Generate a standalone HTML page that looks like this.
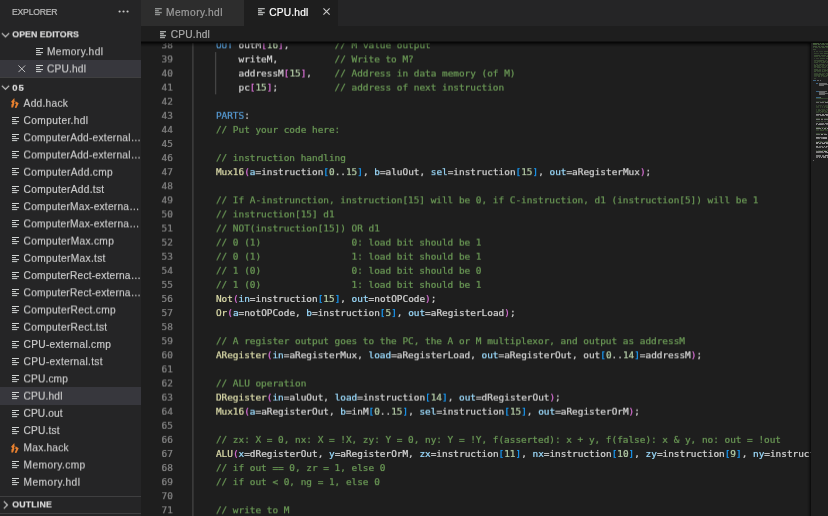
<!DOCTYPE html>
<html lang="en"><head><meta charset="utf-8"><title>CPU.hdl</title>
<style>
*{box-sizing:border-box}
html,body{margin:0;padding:0}
body{width:828px;height:516px;overflow:hidden;background:#1e1e1e;position:relative;font-family:"Liberation Sans",sans-serif;-webkit-font-smoothing:antialiased}
i{font-style:normal}
#tabs,#bc,#side .title,.hdr{will-change:transform}
#side{position:absolute;left:0;top:0;width:141px;height:516px;background:#252526;overflow:hidden;color:#ccc}
#side .title{-webkit-text-stroke:0.2px #bbb;position:absolute;left:12.2px;top:0;height:25.8px;line-height:24.6px;font-size:8.6px;color:#bbb;white-space:nowrap}
#side .dots{position:absolute;left:117.6px;top:10.45px}
.hdr{position:absolute;left:0;width:141px;height:17px;line-height:17px;font-size:8.8px;font-weight:bold;color:#ddd;white-space:nowrap;-webkit-text-stroke:0.15px;transform-origin:0 0}
.hdr .t{position:absolute;left:12.3px;top:0}
.hdr .chev{position:absolute;left:0.8px;top:3.9px}
.selbg{position:absolute;left:0;width:141px;height:17.23px;background:#37373d}
.row{will-change:transform;transform-origin:0 0;position:absolute;left:0;width:141px;height:17px;line-height:17px;font-size:10.18px;color:#ccc;white-space:nowrap;-webkit-text-stroke:0.14px #ccc}
.row .lbl{position:absolute;left:23.6px;top:0}
.ic{position:absolute;left:0;width:141px;height:17px}
.ic .fi{position:absolute;left:12.05px;top:4.95px;fill:#d0d3d2}
.ic .hi{position:absolute;left:10.7px;top:3.6px}
.oe .lbl{left:47.0px}
.oe .fi{left:35.8px}
.oe .cx{position:absolute;left:18.3px;top:4.8px}
.sep{position:absolute;left:0;width:141px;height:1px;background:#3f3f40}
#tabs{position:absolute;left:141px;top:0;width:687px;height:25.8px;background:#252526}
.tab{position:absolute;top:0;height:25.8px;line-height:25.4px;font-size:10.18px;white-space:nowrap;-webkit-text-stroke:0.2px}
.tab .fi{position:absolute;top:8.3px;fill:#d0d3d2}
#bc{position:absolute;left:141px;top:25.8px;width:687px;height:17.2px;background:#1e1e1e;line-height:17.4px;font-size:10.18px;color:#a9a9a9;white-space:nowrap;-webkit-text-stroke:0.2px}
#bc .fi{position:absolute;left:18.5px;top:4.85px;fill:#c4c7c6}
#bc .lbl{position:absolute;left:29.8px;top:0}
#ed{position:absolute;left:141px;top:43px;width:687px;height:473px;overflow:hidden;background:#1e1e1e}
#edin{position:absolute;left:-141px;top:-43px;width:828px;height:516px;font-family:"DejaVu Sans Mono","Liberation Mono",monospace;font-size:9.41px}
.L{-webkit-text-stroke:0.22px;position:absolute;left:141px;width:687px;height:14px;line-height:14px;will-change:transform;transform-origin:0 0;white-space:pre}
.ln{position:absolute;left:0;top:0;width:31.8px;text-align:right;color:#858585}
.cl{letter-spacing:-0.012px;position:absolute;left:52.3px;top:0;color:#d4d4d4}
.c{color:#6a9955}.k{color:#569cd6}.f{color:#dcdcaa}.v{color:#9cdcfe}.n{color:#b5cea8}.p{color:#da70d6}.b{color:#179fff}
.ig{position:absolute;width:1px;background:#424242}
#shadow{position:absolute;left:141px;top:41.2px;width:687px;height:5.6px;background:linear-gradient(#00000000,#000000d0 18%,#000000a0 35%,#00000050 60%,#00000000)}
#mm{position:absolute;left:811px;top:43px;width:17px;height:473px;background:#1e1e1e;overflow:hidden}
#mmsh{position:absolute;left:806.5px;top:43px;width:4.5px;height:473px;background:linear-gradient(90deg,#00000000,#00000038 50%,#000000a8)}
#mmc{position:absolute;left:-811px;top:-43px;width:828px;height:516px}
#mmc div{position:absolute}
</style></head><body>
<div id="side">
<div class="title"><span style="letter-spacing:-0.188px">EXPLORER</span></div>
<svg class="dots" width="12" height="3" viewBox="0 0 12 3"><circle cx="1.6" cy="1.5" r="1.08" fill="#c8c8c8"/><circle cx="5.55" cy="1.5" r="1.08" fill="#c8c8c8"/><circle cx="9.55" cy="1.5" r="1.08" fill="#c8c8c8"/></svg>
<div class="hdr" style="top:26px;transform:translateY(0.35px) rotate(0.001deg)"><svg class=chev viewBox="0 0 16 16" width="9" height="9"><path d="M1.5 5 L8 11.5 L14.5 5" fill="none" stroke="#c8c8c8" stroke-width="2.1"/></svg><span class="t" style="letter-spacing:0.034px">OPEN EDITORS</span></div>
<div class="ic oe" style="top:43.00px"><svg class=fi viewBox="0 0 7 8" width="7" height="8"><rect x="0" y="0" width="7.1" height="1"/><rect x="0" y="2.05" width="4" height="1"/><rect x="0" y="4.08" width="7.1" height="1"/><rect x="0" y="6.1" width="5.2" height="1"/></svg></div><div class="row oe" style="top:43px;transform:translateY(0.250px) rotate(0.001deg)"><span class="lbl" style="letter-spacing:0.401px">Memory.hdl</span></div>
<div class=selbg style="top:60.20px"></div><div class="ic oe" style="top:60.20px"><svg class=cx viewBox="0 0 16 16" width="7.6" height="7.6"><path d="M1 1 L15 15 M15 1 L1 15" fill="none" stroke="#cccccc" stroke-width="1.9"/></svg><svg class=fi viewBox="0 0 7 8" width="7" height="8"><rect x="0" y="0" width="7.1" height="1"/><rect x="0" y="2.05" width="4" height="1"/><rect x="0" y="4.08" width="7.1" height="1"/><rect x="0" y="6.1" width="5.2" height="1"/></svg></div><div class="row oe" style="top:60px;transform:translateY(0.450px) rotate(0.001deg)"><span class="lbl" style="letter-spacing:0.179px">CPU.hdl</span></div>
<div class="sep" style="top:77.4px"></div>
<div class="hdr" style="top:78px;transform:translateY(0.8px) rotate(0.001deg)"><svg class=chev viewBox="0 0 16 16" width="9" height="9"><path d="M1.5 5 L8 11.5 L14.5 5" fill="none" stroke="#c8c8c8" stroke-width="2.1"/></svg><span class="t" style="font-size:9.5px;letter-spacing:0.8px">05</span></div>
<div class="ic " style="top:94.60px"><svg class=hi viewBox="0 0 8 10" width="8" height="10"><path fill="#e8802f" d="M3.3 0 L3.7 3.9 L2.9 4.6 L3.5 5.4 L2.0 9.6 L0.3 9.6 L0.5 6.3 L1.5 5.4 L0.1 3.7 Z M4.6 3.3 L7.7 5.2 L5.4 9.9 L3.8 9.7 L4.5 7.6 L5.3 6.5 L4.2 5.5 Z"/></svg></div><div class="row " style="top:94px;transform:translateY(0.850px) rotate(0.001deg)"><span class=lbl style="letter-spacing:0.273px">Add.hack</span></div>
<div class="ic " style="top:111.82px"><svg class=fi viewBox="0 0 7 8" width="7" height="8"><rect x="0" y="0" width="7.1" height="1"/><rect x="0" y="2.05" width="4" height="1"/><rect x="0" y="4.08" width="7.1" height="1"/><rect x="0" y="6.1" width="5.2" height="1"/></svg></div><div class="row " style="top:112px;transform:translateY(0.073px) rotate(0.001deg)"><span class=lbl style="letter-spacing:0.361px">Computer.hdl</span></div>
<div class="ic " style="top:129.05px"><svg class=fi viewBox="0 0 7 8" width="7" height="8"><rect x="0" y="0" width="7.1" height="1"/><rect x="0" y="2.05" width="4" height="1"/><rect x="0" y="4.08" width="7.1" height="1"/><rect x="0" y="6.1" width="5.2" height="1"/></svg></div><div class="row " style="top:129px;transform:translateY(0.296px) rotate(0.001deg)"><span class=lbl style="letter-spacing:0.240px">ComputerAdd-external…</span></div>
<div class="ic " style="top:146.27px"><svg class=fi viewBox="0 0 7 8" width="7" height="8"><rect x="0" y="0" width="7.1" height="1"/><rect x="0" y="2.05" width="4" height="1"/><rect x="0" y="4.08" width="7.1" height="1"/><rect x="0" y="6.1" width="5.2" height="1"/></svg></div><div class="row " style="top:146px;transform:translateY(0.519px) rotate(0.001deg)"><span class=lbl style="letter-spacing:0.240px">ComputerAdd-external…</span></div>
<div class="ic " style="top:163.49px"><svg class=fi viewBox="0 0 7 8" width="7" height="8"><rect x="0" y="0" width="7.1" height="1"/><rect x="0" y="2.05" width="4" height="1"/><rect x="0" y="4.08" width="7.1" height="1"/><rect x="0" y="6.1" width="5.2" height="1"/></svg></div><div class="row " style="top:163px;transform:translateY(0.742px) rotate(0.001deg)"><span class=lbl style="letter-spacing:0.306px">ComputerAdd.cmp</span></div>
<div class="ic " style="top:180.71px"><svg class=fi viewBox="0 0 7 8" width="7" height="8"><rect x="0" y="0" width="7.1" height="1"/><rect x="0" y="2.05" width="4" height="1"/><rect x="0" y="4.08" width="7.1" height="1"/><rect x="0" y="6.1" width="5.2" height="1"/></svg></div><div class="row " style="top:180px;transform:translateY(0.965px) rotate(0.001deg)"><span class=lbl style="letter-spacing:0.302px">ComputerAdd.tst</span></div>
<div class="ic " style="top:197.94px"><svg class=fi viewBox="0 0 7 8" width="7" height="8"><rect x="0" y="0" width="7.1" height="1"/><rect x="0" y="2.05" width="4" height="1"/><rect x="0" y="4.08" width="7.1" height="1"/><rect x="0" y="6.1" width="5.2" height="1"/></svg></div><div class="row " style="top:198px;transform:translateY(0.188px) rotate(0.001deg)"><span class=lbl style="letter-spacing:0.231px">ComputerMax-externa…</span></div>
<div class="ic " style="top:215.16px"><svg class=fi viewBox="0 0 7 8" width="7" height="8"><rect x="0" y="0" width="7.1" height="1"/><rect x="0" y="2.05" width="4" height="1"/><rect x="0" y="4.08" width="7.1" height="1"/><rect x="0" y="6.1" width="5.2" height="1"/></svg></div><div class="row " style="top:215px;transform:translateY(0.411px) rotate(0.001deg)"><span class=lbl style="letter-spacing:0.231px">ComputerMax-externa…</span></div>
<div class="ic " style="top:232.38px"><svg class=fi viewBox="0 0 7 8" width="7" height="8"><rect x="0" y="0" width="7.1" height="1"/><rect x="0" y="2.05" width="4" height="1"/><rect x="0" y="4.08" width="7.1" height="1"/><rect x="0" y="6.1" width="5.2" height="1"/></svg></div><div class="row " style="top:232px;transform:translateY(0.634px) rotate(0.001deg)"><span class=lbl style="letter-spacing:0.306px">ComputerMax.cmp</span></div>
<div class="ic " style="top:249.61px"><svg class=fi viewBox="0 0 7 8" width="7" height="8"><rect x="0" y="0" width="7.1" height="1"/><rect x="0" y="2.05" width="4" height="1"/><rect x="0" y="4.08" width="7.1" height="1"/><rect x="0" y="6.1" width="5.2" height="1"/></svg></div><div class="row " style="top:249px;transform:translateY(0.857px) rotate(0.001deg)"><span class=lbl style="letter-spacing:0.315px">ComputerMax.tst</span></div>
<div class="ic " style="top:266.83px"><svg class=fi viewBox="0 0 7 8" width="7" height="8"><rect x="0" y="0" width="7.1" height="1"/><rect x="0" y="2.05" width="4" height="1"/><rect x="0" y="4.08" width="7.1" height="1"/><rect x="0" y="6.1" width="5.2" height="1"/></svg></div><div class="row " style="top:267px;transform:translateY(0.080px) rotate(0.001deg)"><span class=lbl style="letter-spacing:0.212px">ComputerRect-externa…</span></div>
<div class="ic " style="top:284.05px"><svg class=fi viewBox="0 0 7 8" width="7" height="8"><rect x="0" y="0" width="7.1" height="1"/><rect x="0" y="2.05" width="4" height="1"/><rect x="0" y="4.08" width="7.1" height="1"/><rect x="0" y="6.1" width="5.2" height="1"/></svg></div><div class="row " style="top:284px;transform:translateY(0.303px) rotate(0.001deg)"><span class=lbl style="letter-spacing:0.212px">ComputerRect-externa…</span></div>
<div class="ic " style="top:301.28px"><svg class=fi viewBox="0 0 7 8" width="7" height="8"><rect x="0" y="0" width="7.1" height="1"/><rect x="0" y="2.05" width="4" height="1"/><rect x="0" y="4.08" width="7.1" height="1"/><rect x="0" y="6.1" width="5.2" height="1"/></svg></div><div class="row " style="top:301px;transform:translateY(0.526px) rotate(0.001deg)"><span class=lbl style="letter-spacing:0.291px">ComputerRect.cmp</span></div>
<div class="ic " style="top:318.50px"><svg class=fi viewBox="0 0 7 8" width="7" height="8"><rect x="0" y="0" width="7.1" height="1"/><rect x="0" y="2.05" width="4" height="1"/><rect x="0" y="4.08" width="7.1" height="1"/><rect x="0" y="6.1" width="5.2" height="1"/></svg></div><div class="row " style="top:318px;transform:translateY(0.749px) rotate(0.001deg)"><span class=lbl style="letter-spacing:0.294px">ComputerRect.tst</span></div>
<div class="ic " style="top:335.72px"><svg class=fi viewBox="0 0 7 8" width="7" height="8"><rect x="0" y="0" width="7.1" height="1"/><rect x="0" y="2.05" width="4" height="1"/><rect x="0" y="4.08" width="7.1" height="1"/><rect x="0" y="6.1" width="5.2" height="1"/></svg></div><div class="row " style="top:335px;transform:translateY(0.972px) rotate(0.001deg)"><span class=lbl style="letter-spacing:0.275px">CPU-external.cmp</span></div>
<div class="ic " style="top:352.94px"><svg class=fi viewBox="0 0 7 8" width="7" height="8"><rect x="0" y="0" width="7.1" height="1"/><rect x="0" y="2.05" width="4" height="1"/><rect x="0" y="4.08" width="7.1" height="1"/><rect x="0" y="6.1" width="5.2" height="1"/></svg></div><div class="row " style="top:353px;transform:translateY(0.195px) rotate(0.001deg)"><span class=lbl style="letter-spacing:0.283px">CPU-external.tst</span></div>
<div class="ic " style="top:370.17px"><svg class=fi viewBox="0 0 7 8" width="7" height="8"><rect x="0" y="0" width="7.1" height="1"/><rect x="0" y="2.05" width="4" height="1"/><rect x="0" y="4.08" width="7.1" height="1"/><rect x="0" y="6.1" width="5.2" height="1"/></svg></div><div class="row " style="top:370px;transform:translateY(0.418px) rotate(0.001deg)"><span class=lbl style="letter-spacing:0.123px">CPU.cmp</span></div>
<div class=selbg style="top:387.39px"></div><div class="ic " style="top:387.39px"><svg class=fi viewBox="0 0 7 8" width="7" height="8"><rect x="0" y="0" width="7.1" height="1"/><rect x="0" y="2.05" width="4" height="1"/><rect x="0" y="4.08" width="7.1" height="1"/><rect x="0" y="6.1" width="5.2" height="1"/></svg></div><div class="row " style="top:387px;transform:translateY(0.641px) rotate(0.001deg)"><span class=lbl style="letter-spacing:0.163px">CPU.hdl</span></div>
<div class="ic " style="top:404.61px"><svg class=fi viewBox="0 0 7 8" width="7" height="8"><rect x="0" y="0" width="7.1" height="1"/><rect x="0" y="2.05" width="4" height="1"/><rect x="0" y="4.08" width="7.1" height="1"/><rect x="0" y="6.1" width="5.2" height="1"/></svg></div><div class="row " style="top:404px;transform:translateY(0.864px) rotate(0.001deg)"><span class=lbl style="letter-spacing:0.074px">CPU.out</span></div>
<div class="ic " style="top:421.84px"><svg class=fi viewBox="0 0 7 8" width="7" height="8"><rect x="0" y="0" width="7.1" height="1"/><rect x="0" y="2.05" width="4" height="1"/><rect x="0" y="4.08" width="7.1" height="1"/><rect x="0" y="6.1" width="5.2" height="1"/></svg></div><div class="row " style="top:422px;transform:translateY(0.087px) rotate(0.001deg)"><span class=lbl style="letter-spacing:0.142px">CPU.tst</span></div>
<div class="ic " style="top:439.06px"><svg class=hi viewBox="0 0 8 10" width="8" height="10"><path fill="#e8802f" d="M3.3 0 L3.7 3.9 L2.9 4.6 L3.5 5.4 L2.0 9.6 L0.3 9.6 L0.5 6.3 L1.5 5.4 L0.1 3.7 Z M4.6 3.3 L7.7 5.2 L5.4 9.9 L3.8 9.7 L4.5 7.6 L5.3 6.5 L4.2 5.5 Z"/></svg></div><div class="row " style="top:439px;transform:translateY(0.310px) rotate(0.001deg)"><span class=lbl style="letter-spacing:0.215px">Max.hack</span></div>
<div class="ic " style="top:456.28px"><svg class=fi viewBox="0 0 7 8" width="7" height="8"><rect x="0" y="0" width="7.1" height="1"/><rect x="0" y="2.05" width="4" height="1"/><rect x="0" y="4.08" width="7.1" height="1"/><rect x="0" y="6.1" width="5.2" height="1"/></svg></div><div class="row " style="top:456px;transform:translateY(0.533px) rotate(0.001deg)"><span class=lbl style="letter-spacing:0.405px">Memory.cmp</span></div>
<div class="ic " style="top:473.51px"><svg class=fi viewBox="0 0 7 8" width="7" height="8"><rect x="0" y="0" width="7.1" height="1"/><rect x="0" y="2.05" width="4" height="1"/><rect x="0" y="4.08" width="7.1" height="1"/><rect x="0" y="6.1" width="5.2" height="1"/></svg></div><div class="row " style="top:473px;transform:translateY(0.756px) rotate(0.001deg)"><span class=lbl style="letter-spacing:0.445px">Memory.hdl</span></div>
<div class="sep" style="top:495.6px"></div>
<div class="hdr" style="top:496px;transform:translateY(0.45px) rotate(0.001deg)"><svg class=chev viewBox="0 0 16 16" width="9" height="9"><path d="M5 1.5 L11.5 8 L5 14.5" fill="none" stroke="#c8c8c8" stroke-width="2.1"/></svg><span class="t" style="letter-spacing:0.148px">OUTLINE</span></div>
<div class="sep" style="top:513.0px"></div>
</div>
<div id="tabs">
<div class="tab" style="left:0;width:103px;background:#2d2d2d;color:#9d9d9d"><svg class=fi style="left:13.9px;opacity:.75" viewBox="0 0 7 8" width="6.7" height="8"><g opacity="0.82"><rect x="0" y="-0.2" width="7.1" height="1.45"/><rect x="0" y="1.85" width="4" height="1.45"/><rect x="0" y="3.88" width="7.1" height="1.45"/><rect x="0" y="5.9" width="5.2" height="1.45"/></g></svg><span style="position:absolute;left:25.1px;letter-spacing:0.445px">Memory.hdl</span></div>
<div class="tab" style="left:103px;width:94px;background:#1e1e1e;color:#fff"><svg class=fi style="left:14.4px" viewBox="0 0 7 8" width="6.7" height="8"><g opacity="0.82"><rect x="0" y="-0.2" width="7.1" height="1.45"/><rect x="0" y="1.85" width="4" height="1.45"/><rect x="0" y="3.88" width="7.1" height="1.45"/><rect x="0" y="5.9" width="5.2" height="1.45"/></g></svg><span style="position:absolute;left:25.2px;letter-spacing:0.196px">CPU.hdl</span><svg class=cx style="position:absolute;left:79.3px;top:8.4px" viewBox="0 0 16 16" width="7.1" height="7.1"><path d="M1 1 L15 15 M15 1 L1 15" fill="none" stroke="#cccccc" stroke-width="2.4"/></svg></div>
</div>
<div id="bc"><svg class=fi viewBox="0 0 7 8" width="6.7" height="8"><g opacity="0.82"><rect x="0" y="-0.2" width="7.1" height="1.45"/><rect x="0" y="1.85" width="4" height="1.45"/><rect x="0" y="3.88" width="7.1" height="1.45"/><rect x="0" y="5.9" width="5.2" height="1.45"/></g></svg><span class="lbl" style="letter-spacing:0.196px">CPU.hdl</span></div>
<div id="ed"><div id="edin">
<svg style="position:absolute;left:0;top:0" width="828" height="516"><rect x="192.25" y="38.01" width="1.3" height="493.15" fill="#444"/><rect x="214.95" y="52.10" width="1.3" height="42.27" fill="#444"/></svg>
<div class=L style="top:38px;transform:translateY(0.360px) rotate(0.001deg)"><span class=ln>38</span><span class=cl>    <i class=k>OUT</i> outM<i class=p>[</i><i class=n>16</i><i class=p>]</i>,        <i class=c>// M value output</i></span></div>
<div class=L style="top:52px;transform:translateY(0.450px) rotate(0.001deg)"><span class=ln>39</span><span class=cl>        writeM,          <i class=c>// Write to M?</i></span></div>
<div class=L style="top:66px;transform:translateY(0.540px) rotate(0.001deg)"><span class=ln>40</span><span class=cl>        addressM<i class=p>[</i><i class=n>15</i><i class=p>]</i>,    <i class=c>// Address in data memory (of M)</i></span></div>
<div class=L style="top:80px;transform:translateY(0.630px) rotate(0.001deg)"><span class=ln>41</span><span class=cl>        pc<i class=p>[</i><i class=n>15</i><i class=p>]</i>;          <i class=c>// address of next instruction</i></span></div>
<div class=L style="top:94px;transform:translateY(0.720px) rotate(0.001deg)"><span class=ln>42</span></div>
<div class=L style="top:108px;transform:translateY(0.810px) rotate(0.001deg)"><span class=ln>43</span><span class=cl>    <i class=k>PARTS</i>:</span></div>
<div class=L style="top:122px;transform:translateY(0.900px) rotate(0.001deg)"><span class=ln>44</span><span class=cl>    <i class=c>// Put your code here:</i></span></div>
<div class=L style="top:136px;transform:translateY(0.990px) rotate(0.001deg)"><span class=ln>45</span></div>
<div class=L style="top:151px;transform:translateY(0.080px) rotate(0.001deg)"><span class=ln>46</span><span class=cl>    <i class=c>// instruction handling</i></span></div>
<div class=L style="top:165px;transform:translateY(0.170px) rotate(0.001deg)"><span class=ln>47</span><span class=cl>    <i class=f>Mux16</i><i class=p>(</i><i class=v>a</i>=instruction<i class=b>[</i><i class=n>0</i>..<i class=n>15</i><i class=b>]</i>, <i class=v>b</i>=aluOut, <i class=v>sel</i>=instruction<i class=b>[</i><i class=n>15</i><i class=b>]</i>, <i class=v>out</i>=aRegisterMux<i class=p>)</i>;</span></div>
<div class=L style="top:179px;transform:translateY(0.260px) rotate(0.001deg)"><span class=ln>48</span></div>
<div class=L style="top:193px;transform:translateY(0.350px) rotate(0.001deg)"><span class=ln>49</span><span class=cl>    <i class=c>// If A-instrunction, instruction[15] will be 0, if C-instruction, d1 (instruction[5]) will be 1</i></span></div>
<div class=L style="top:207px;transform:translateY(0.440px) rotate(0.001deg)"><span class=ln>50</span><span class=cl>    <i class=c>// instruction[15] d1</i></span></div>
<div class=L style="top:221px;transform:translateY(0.530px) rotate(0.001deg)"><span class=ln>51</span><span class=cl>    <i class=c>// NOT(instruction[15]) OR d1</i></span></div>
<div class=L style="top:235px;transform:translateY(0.620px) rotate(0.001deg)"><span class=ln>52</span><span class=cl>    <i class=c>// 0 (1)                0: load bit should be 1</i></span></div>
<div class=L style="top:249px;transform:translateY(0.710px) rotate(0.001deg)"><span class=ln>53</span><span class=cl>    <i class=c>// 0 (1)                1: load bit should be 1</i></span></div>
<div class=L style="top:263px;transform:translateY(0.800px) rotate(0.001deg)"><span class=ln>54</span><span class=cl>    <i class=c>// 1 (0)                0: load bit should be 0</i></span></div>
<div class=L style="top:277px;transform:translateY(0.890px) rotate(0.001deg)"><span class=ln>55</span><span class=cl>    <i class=c>// 1 (0)                1: load bit should be 1</i></span></div>
<div class=L style="top:291px;transform:translateY(0.980px) rotate(0.001deg)"><span class=ln>56</span><span class=cl>    <i class=f>Not</i><i class=p>(</i><i class=v>in</i>=instruction<i class=b>[</i><i class=n>15</i><i class=b>]</i>, <i class=v>out</i>=notOPCode<i class=p>)</i>;</span></div>
<div class=L style="top:306px;transform:translateY(0.070px) rotate(0.001deg)"><span class=ln>57</span><span class=cl>    <i class=f>Or</i><i class=p>(</i><i class=v>a</i>=notOPCode, <i class=v>b</i>=instruction<i class=b>[</i><i class=n>5</i><i class=b>]</i>, <i class=v>out</i>=aRegisterLoad<i class=p>)</i>;</span></div>
<div class=L style="top:320px;transform:translateY(0.160px) rotate(0.001deg)"><span class=ln>58</span></div>
<div class=L style="top:334px;transform:translateY(0.250px) rotate(0.001deg)"><span class=ln>59</span><span class=cl>    <i class=c>// A register output goes to the PC, the A or M multiplexor, and output as addressM</i></span></div>
<div class=L style="top:348px;transform:translateY(0.340px) rotate(0.001deg)"><span class=ln>60</span><span class=cl>    <i class=f>ARegister</i><i class=p>(</i><i class=v>in</i>=aRegisterMux, <i class=v>load</i>=aRegisterLoad, <i class=v>out</i>=aRegisterOut, out<i class=b>[</i><i class=n>0</i>..<i class=n>14</i><i class=b>]</i>=addressM<i class=p>)</i>;</span></div>
<div class=L style="top:362px;transform:translateY(0.430px) rotate(0.001deg)"><span class=ln>61</span></div>
<div class=L style="top:376px;transform:translateY(0.520px) rotate(0.001deg)"><span class=ln>62</span><span class=cl>    <i class=c>// ALU operation</i></span></div>
<div class=L style="top:390px;transform:translateY(0.610px) rotate(0.001deg)"><span class=ln>63</span><span class=cl>    <i class=f>DRegister</i><i class=p>(</i><i class=v>in</i>=aluOut, <i class=v>load</i>=instruction<i class=b>[</i><i class=n>14</i><i class=b>]</i>, <i class=v>out</i>=dRegisterOut<i class=p>)</i>;</span></div>
<div class=L style="top:404px;transform:translateY(0.700px) rotate(0.001deg)"><span class=ln>64</span><span class=cl>    <i class=f>Mux16</i><i class=p>(</i><i class=v>a</i>=aRegisterOut, <i class=v>b</i>=inM<i class=b>[</i><i class=n>0</i>..<i class=n>15</i><i class=b>]</i>, <i class=v>sel</i>=instruction<i class=b>[</i><i class=n>15</i><i class=b>]</i>, <i class=v>out</i>=aRegisterOrM<i class=p>)</i>;</span></div>
<div class=L style="top:418px;transform:translateY(0.790px) rotate(0.001deg)"><span class=ln>65</span></div>
<div class=L style="top:432px;transform:translateY(0.880px) rotate(0.001deg)"><span class=ln>66</span><span class=cl>    <i class=c>// zx: X = 0, nx: X = !X, zy: Y = 0, ny: Y = !Y, f(asserted): x + y, f(false): x &amp; y, no: out = !out</i></span></div>
<div class=L style="top:446px;transform:translateY(0.970px) rotate(0.001deg)"><span class=ln>67</span><span class=cl>    <i class=f>ALU</i><i class=p>(</i><i class=v>x</i>=dRegisterOut, <i class=v>y</i>=aRegisterOrM, <i class=v>zx</i>=instruction<i class=b>[</i><i class=n>11</i><i class=b>]</i>, <i class=v>nx</i>=instruction<i class=b>[</i><i class=n>10</i><i class=b>]</i>, <i class=v>zy</i>=instruction<i class=b>[</i><i class=n>9</i><i class=b>]</i>, <i class=v>ny</i>=instruction<i class=b>[</i><i class=n>8</i><i class=b>]</i>, <i class=v>f</i>=instruction<i class=b>[</i><i class=n>7</i><i class=b>]</i>, <i class=v>no</i>=instruction<i class=b>[</i><i class=n>6</i><i class=b>]</i>, <i class=v>out</i>=aluOut, <i class=v>out</i>=outM, <i class=v>zr</i>=zr, <i class=v>ng</i>=ng<i class=p>)</i>;</span></div>
<div class=L style="top:461px;transform:translateY(0.060px) rotate(0.001deg)"><span class=ln>68</span><span class=cl>    <i class=c>// if out == 0, zr = 1, else 0</i></span></div>
<div class=L style="top:475px;transform:translateY(0.150px) rotate(0.001deg)"><span class=ln>69</span><span class=cl>    <i class=c>// if out &lt; 0, ng = 1, else 0</i></span></div>
<div class=L style="top:489px;transform:translateY(0.240px) rotate(0.001deg)"><span class=ln>70</span></div>
<div class=L style="top:503px;transform:translateY(0.330px) rotate(0.001deg)"><span class=ln>71</span><span class=cl>    <i class=c>// write to M</i></span></div>
<div class=L style="top:517px;transform:translateY(0.420px) rotate(0.001deg)"><span class=ln>72</span><span class=cl>    <i class=f>Or</i><i class=p>(</i><i class=v>a</i>=instruction<i class=b>[</i><i class=n>3</i><i class=b>]</i>, <i class=v>b</i>=false, <i class=v>out</i>=writeM<i class=p>)</i>;</span></div>
</div></div>
<div id="shadow"></div>
<div id="mmsh"></div>
<div id="mm"><div id="mmc">
<div style="left:813.20px;top:43.00px;width:2.35px;height:0.95px;background:#6A9955;opacity:0.51"></div>
<div style="left:816.33px;top:43.00px;width:3.13px;height:0.95px;background:#6A9955;opacity:0.44"></div>
<div style="left:820.25px;top:43.00px;width:0.78px;height:0.95px;background:#6A9955;opacity:0.48"></div>
<div style="left:821.81px;top:43.00px;width:0.78px;height:0.95px;background:#6A9955;opacity:0.38"></div>
<div style="left:823.38px;top:43.00px;width:0.78px;height:0.95px;background:#6A9955;opacity:0.50"></div>
<div style="left:824.95px;top:43.00px;width:1.57px;height:0.95px;background:#6A9955;opacity:0.30"></div>
<div style="left:827.29px;top:43.00px;width:1.21px;height:0.95px;background:#6A9955;opacity:0.39"></div>
<div style="left:813.20px;top:44.29px;width:3.92px;height:0.95px;background:#6A9955;opacity:0.43"></div>
<div style="left:817.90px;top:44.29px;width:0.78px;height:0.95px;background:#6A9955;opacity:0.52"></div>
<div style="left:819.46px;top:44.29px;width:0.78px;height:0.95px;background:#6A9955;opacity:0.42"></div>
<div style="left:821.03px;top:44.29px;width:1.57px;height:0.95px;background:#6A9955;opacity:0.36"></div>
<div style="left:823.38px;top:44.29px;width:1.57px;height:0.95px;background:#6A9955;opacity:0.42"></div>
<div style="left:825.73px;top:44.29px;width:2.77px;height:0.95px;background:#6A9955;opacity:0.37"></div>
<div style="left:813.20px;top:45.57px;width:3.92px;height:0.95px;background:#6A9955;opacity:0.39"></div>
<div style="left:817.90px;top:45.57px;width:2.35px;height:0.95px;background:#6A9955;opacity:0.40"></div>
<div style="left:821.03px;top:45.57px;width:3.13px;height:0.95px;background:#6A9955;opacity:0.38"></div>
<div style="left:824.95px;top:45.57px;width:1.57px;height:0.95px;background:#6A9955;opacity:0.48"></div>
<div style="left:827.29px;top:45.57px;width:1.21px;height:0.95px;background:#6A9955;opacity:0.47"></div>
<div style="left:813.20px;top:46.86px;width:0.78px;height:0.95px;background:#6A9955;opacity:0.32"></div>
<div style="left:814.77px;top:46.86px;width:3.13px;height:0.95px;background:#6A9955;opacity:0.33"></div>
<div style="left:818.68px;top:46.86px;width:2.35px;height:0.95px;background:#6A9955;opacity:0.33"></div>
<div style="left:821.81px;top:46.86px;width:3.13px;height:0.95px;background:#6A9955;opacity:0.39"></div>
<div style="left:825.73px;top:46.86px;width:2.77px;height:0.95px;background:#6A9955;opacity:0.31"></div>
<div style="left:813.20px;top:49.43px;width:2.35px;height:0.95px;background:#6A9955;opacity:0.34"></div>
<div style="left:813.98px;top:50.72px;width:0.78px;height:0.95px;background:#6A9955;opacity:0.35"></div>
<div style="left:815.55px;top:50.72px;width:2.35px;height:0.95px;background:#6A9955;opacity:0.29"></div>
<div style="left:818.68px;top:50.72px;width:4.70px;height:0.95px;background:#6A9955;opacity:0.22"></div>
<div style="left:824.16px;top:50.72px;width:4.34px;height:0.95px;background:#6A9955;opacity:0.33"></div>
<div style="left:813.98px;top:53.29px;width:1.57px;height:0.95px;background:#6A9955;opacity:0.28"></div>
<div style="left:816.33px;top:53.29px;width:3.13px;height:0.95px;background:#6A9955;opacity:0.22"></div>
<div style="left:820.25px;top:53.29px;width:3.13px;height:0.95px;background:#6A9955;opacity:0.28"></div>
<div style="left:824.16px;top:53.29px;width:2.35px;height:0.95px;background:#6A9955;opacity:0.36"></div>
<div style="left:827.29px;top:53.29px;width:1.21px;height:0.95px;background:#6A9955;opacity:0.35"></div>
<div style="left:813.98px;top:54.57px;width:1.57px;height:0.95px;background:#6A9955;opacity:0.32"></div>
<div style="left:816.33px;top:54.57px;width:3.92px;height:0.95px;background:#6A9955;opacity:0.37"></div>
<div style="left:821.03px;top:54.57px;width:4.70px;height:0.95px;background:#6A9955;opacity:0.32"></div>
<div style="left:826.51px;top:54.57px;width:0.78px;height:0.95px;background:#6A9955;opacity:0.29"></div>
<div style="left:813.98px;top:55.86px;width:1.57px;height:0.95px;background:#6A9955;opacity:0.31"></div>
<div style="left:816.33px;top:55.86px;width:1.57px;height:0.95px;background:#6A9955;opacity:0.31"></div>
<div style="left:818.68px;top:55.86px;width:2.35px;height:0.95px;background:#6A9955;opacity:0.31"></div>
<div style="left:821.81px;top:55.86px;width:3.13px;height:0.95px;background:#6A9955;opacity:0.23"></div>
<div style="left:825.73px;top:55.86px;width:2.77px;height:0.95px;background:#6A9955;opacity:0.37"></div>
<div style="left:813.98px;top:58.43px;width:0.78px;height:0.95px;background:#6A9955;opacity:0.24"></div>
<div style="left:815.55px;top:58.43px;width:3.92px;height:0.95px;background:#6A9955;opacity:0.27"></div>
<div style="left:820.25px;top:58.43px;width:4.70px;height:0.95px;background:#6A9955;opacity:0.30"></div>
<div style="left:825.73px;top:58.43px;width:0.78px;height:0.95px;background:#6A9955;opacity:0.34"></div>
<div style="left:827.29px;top:58.43px;width:1.21px;height:0.95px;background:#6A9955;opacity:0.37"></div>
<div style="left:813.98px;top:59.72px;width:1.57px;height:0.95px;background:#6A9955;opacity:0.32"></div>
<div style="left:816.33px;top:59.72px;width:2.35px;height:0.95px;background:#6A9955;opacity:0.28"></div>
<div style="left:819.46px;top:59.72px;width:4.70px;height:0.95px;background:#6A9955;opacity:0.37"></div>
<div style="left:824.95px;top:59.72px;width:2.35px;height:0.95px;background:#6A9955;opacity:0.22"></div>
<div style="left:813.98px;top:61.00px;width:2.35px;height:0.95px;background:#6A9955;opacity:0.22"></div>
<div style="left:817.12px;top:61.00px;width:4.70px;height:0.95px;background:#6A9955;opacity:0.28"></div>
<div style="left:822.60px;top:61.00px;width:3.13px;height:0.95px;background:#6A9955;opacity:0.33"></div>
<div style="left:826.51px;top:61.00px;width:0.78px;height:0.95px;background:#6A9955;opacity:0.33"></div>
<div style="left:813.98px;top:62.29px;width:1.57px;height:0.95px;background:#6A9955;opacity:0.28"></div>
<div style="left:816.33px;top:62.29px;width:1.57px;height:0.95px;background:#6A9955;opacity:0.35"></div>
<div style="left:818.68px;top:62.29px;width:1.57px;height:0.95px;background:#6A9955;opacity:0.21"></div>
<div style="left:821.03px;top:62.29px;width:1.57px;height:0.95px;background:#6A9955;opacity:0.26"></div>
<div style="left:823.38px;top:62.29px;width:1.57px;height:0.95px;background:#6A9955;opacity:0.34"></div>
<div style="left:825.73px;top:62.29px;width:2.35px;height:0.95px;background:#6A9955;opacity:0.25"></div>
<div style="left:813.98px;top:63.58px;width:0.78px;height:0.95px;background:#6A9955;opacity:0.30"></div>
<div style="left:815.55px;top:63.58px;width:2.35px;height:0.95px;background:#6A9955;opacity:0.32"></div>
<div style="left:818.68px;top:63.58px;width:3.92px;height:0.95px;background:#6A9955;opacity:0.30"></div>
<div style="left:823.38px;top:63.58px;width:0.78px;height:0.95px;background:#6A9955;opacity:0.36"></div>
<div style="left:824.95px;top:63.58px;width:0.78px;height:0.95px;background:#6A9955;opacity:0.25"></div>
<div style="left:826.51px;top:63.58px;width:1.99px;height:0.95px;background:#6A9955;opacity:0.22"></div>
<div style="left:813.98px;top:64.86px;width:2.35px;height:0.95px;background:#6A9955;opacity:0.36"></div>
<div style="left:817.12px;top:64.86px;width:1.57px;height:0.95px;background:#6A9955;opacity:0.35"></div>
<div style="left:819.46px;top:64.86px;width:1.57px;height:0.95px;background:#6A9955;opacity:0.28"></div>
<div style="left:821.81px;top:64.86px;width:3.13px;height:0.95px;background:#6A9955;opacity:0.28"></div>
<div style="left:825.73px;top:64.86px;width:0.78px;height:0.95px;background:#6A9955;opacity:0.32"></div>
<div style="left:827.29px;top:64.86px;width:1.21px;height:0.95px;background:#6A9955;opacity:0.22"></div>
<div style="left:813.98px;top:66.15px;width:1.57px;height:0.95px;background:#6A9955;opacity:0.33"></div>
<div style="left:816.33px;top:66.15px;width:3.92px;height:0.95px;background:#6A9955;opacity:0.28"></div>
<div style="left:821.03px;top:66.15px;width:3.13px;height:0.95px;background:#6A9955;opacity:0.24"></div>
<div style="left:824.95px;top:66.15px;width:2.35px;height:0.95px;background:#6A9955;opacity:0.23"></div>
<div style="left:813.98px;top:67.43px;width:2.35px;height:0.95px;background:#6A9955;opacity:0.28"></div>
<div style="left:817.12px;top:67.43px;width:3.92px;height:0.95px;background:#6A9955;opacity:0.36"></div>
<div style="left:821.81px;top:67.43px;width:3.92px;height:0.95px;background:#6A9955;opacity:0.29"></div>
<div style="left:826.51px;top:67.43px;width:1.99px;height:0.95px;background:#6A9955;opacity:0.22"></div>
<div style="left:813.98px;top:68.72px;width:3.92px;height:0.95px;background:#6A9955;opacity:0.34"></div>
<div style="left:818.68px;top:68.72px;width:2.35px;height:0.95px;background:#6A9955;opacity:0.28"></div>
<div style="left:821.81px;top:68.72px;width:4.70px;height:0.95px;background:#6A9955;opacity:0.24"></div>
<div style="left:827.29px;top:68.72px;width:1.21px;height:0.95px;background:#6A9955;opacity:0.34"></div>
<div style="left:813.98px;top:70.01px;width:1.57px;height:0.95px;background:#6A9955;opacity:0.27"></div>
<div style="left:816.33px;top:70.01px;width:4.70px;height:0.95px;background:#6A9955;opacity:0.33"></div>
<div style="left:821.81px;top:70.01px;width:1.57px;height:0.95px;background:#6A9955;opacity:0.28"></div>
<div style="left:824.16px;top:70.01px;width:2.35px;height:0.95px;background:#6A9955;opacity:0.37"></div>
<div style="left:827.29px;top:70.01px;width:1.21px;height:0.95px;background:#6A9955;opacity:0.21"></div>
<div style="left:813.98px;top:71.29px;width:2.35px;height:0.95px;background:#6A9955;opacity:0.37"></div>
<div style="left:817.12px;top:71.29px;width:3.92px;height:0.95px;background:#6A9955;opacity:0.26"></div>
<div style="left:821.81px;top:71.29px;width:0.78px;height:0.95px;background:#6A9955;opacity:0.37"></div>
<div style="left:823.38px;top:71.29px;width:2.35px;height:0.95px;background:#6A9955;opacity:0.25"></div>
<div style="left:826.51px;top:71.29px;width:1.57px;height:0.95px;background:#6A9955;opacity:0.21"></div>
<div style="left:813.98px;top:72.58px;width:3.92px;height:0.95px;background:#6A9955;opacity:0.27"></div>
<div style="left:818.68px;top:72.58px;width:2.35px;height:0.95px;background:#6A9955;opacity:0.33"></div>
<div style="left:821.81px;top:72.58px;width:3.13px;height:0.95px;background:#6A9955;opacity:0.23"></div>
<div style="left:825.73px;top:72.58px;width:2.77px;height:0.95px;background:#6A9955;opacity:0.31"></div>
<div style="left:813.98px;top:73.86px;width:4.70px;height:0.95px;background:#6A9955;opacity:0.32"></div>
<div style="left:819.46px;top:73.86px;width:4.70px;height:0.95px;background:#6A9955;opacity:0.32"></div>
<div style="left:824.95px;top:73.86px;width:0.78px;height:0.95px;background:#6A9955;opacity:0.22"></div>
<div style="left:826.51px;top:73.86px;width:1.57px;height:0.95px;background:#6A9955;opacity:0.32"></div>
<div style="left:813.98px;top:75.15px;width:4.70px;height:0.95px;background:#6A9955;opacity:0.29"></div>
<div style="left:819.46px;top:75.15px;width:0.78px;height:0.95px;background:#6A9955;opacity:0.35"></div>
<div style="left:821.03px;top:75.15px;width:1.57px;height:0.95px;background:#6A9955;opacity:0.33"></div>
<div style="left:823.38px;top:75.15px;width:1.57px;height:0.95px;background:#6A9955;opacity:0.25"></div>
<div style="left:825.73px;top:75.15px;width:2.77px;height:0.95px;background:#6A9955;opacity:0.37"></div>
<div style="left:813.98px;top:76.44px;width:3.13px;height:0.95px;background:#6A9955;opacity:0.22"></div>
<div style="left:817.90px;top:76.44px;width:2.35px;height:0.95px;background:#6A9955;opacity:0.37"></div>
<div style="left:821.03px;top:76.44px;width:0.78px;height:0.95px;background:#6A9955;opacity:0.32"></div>
<div style="left:822.60px;top:76.44px;width:4.70px;height:0.95px;background:#6A9955;opacity:0.29"></div>
<div style="left:813.98px;top:77.72px;width:1.57px;height:0.95px;background:#6A9955;opacity:0.30"></div>
<div style="left:813.20px;top:80.29px;width:3.13px;height:0.95px;background:#569CD6;opacity:0.55"></div>
<div style="left:817.12px;top:80.29px;width:2.35px;height:0.95px;background:#d4d4d4;opacity:0.40"></div>
<div style="left:820.25px;top:80.29px;width:0.78px;height:0.95px;background:#d4d4d4;opacity:0.40"></div>
<div style="left:816.33px;top:82.87px;width:1.57px;height:0.95px;background:#569CD6;opacity:0.55"></div>
<div style="left:819.46px;top:82.87px;width:7.05px;height:0.95px;background:#d4d4d4;opacity:0.40"></div>
<div style="left:819.46px;top:84.15px;width:9.04px;height:0.95px;background:#d4d4d4;opacity:0.40"></div>
<div style="left:819.46px;top:85.44px;width:4.70px;height:0.95px;background:#d4d4d4;opacity:0.40"></div>
<div style="left:816.33px;top:90.58px;width:2.35px;height:0.95px;background:#569CD6;opacity:0.55"></div>
<div style="left:819.46px;top:90.58px;width:7.05px;height:0.95px;background:#d4d4d4;opacity:0.40"></div>
<div style="left:819.46px;top:91.87px;width:5.48px;height:0.95px;background:#d4d4d4;opacity:0.40"></div>
<div style="left:819.46px;top:93.15px;width:9.04px;height:0.95px;background:#d4d4d4;opacity:0.40"></div>
<div style="left:819.46px;top:94.44px;width:5.48px;height:0.95px;background:#d4d4d4;opacity:0.40"></div>
<div style="left:816.33px;top:97.01px;width:3.92px;height:0.95px;background:#569CD6;opacity:0.55"></div>
<div style="left:820.25px;top:97.01px;width:0.78px;height:0.95px;background:#d4d4d4;opacity:0.40"></div>
<div style="left:816.33px;top:98.30px;width:2.35px;height:0.95px;background:#6A9955;opacity:0.34"></div>
<div style="left:819.46px;top:98.30px;width:3.13px;height:0.95px;background:#6A9955;opacity:0.36"></div>
<div style="left:823.38px;top:98.30px;width:4.70px;height:0.95px;background:#6A9955;opacity:0.28"></div>
<div style="left:816.33px;top:100.87px;width:4.70px;height:0.95px;background:#6A9955;opacity:0.22"></div>
<div style="left:821.81px;top:100.87px;width:4.70px;height:0.95px;background:#6A9955;opacity:0.28"></div>
<div style="left:827.29px;top:100.87px;width:1.21px;height:0.95px;background:#6A9955;opacity:0.33"></div>
<div style="left:816.33px;top:102.16px;width:3.13px;height:0.95px;background:#d4d4d4;opacity:0.40"></div>
<div style="left:820.25px;top:102.16px;width:3.92px;height:0.95px;background:#d4d4d4;opacity:0.42"></div>
<div style="left:824.95px;top:102.16px;width:3.13px;height:0.95px;background:#d4d4d4;opacity:0.51"></div>
<div style="left:816.33px;top:104.73px;width:0.78px;height:0.95px;background:#6A9955;opacity:0.24"></div>
<div style="left:817.90px;top:104.73px;width:3.92px;height:0.95px;background:#6A9955;opacity:0.23"></div>
<div style="left:822.60px;top:104.73px;width:1.57px;height:0.95px;background:#6A9955;opacity:0.27"></div>
<div style="left:824.95px;top:104.73px;width:3.55px;height:0.95px;background:#6A9955;opacity:0.24"></div>
<div style="left:816.33px;top:106.01px;width:3.13px;height:0.95px;background:#6A9955;opacity:0.25"></div>
<div style="left:820.25px;top:106.01px;width:0.78px;height:0.95px;background:#6A9955;opacity:0.25"></div>
<div style="left:821.81px;top:106.01px;width:1.57px;height:0.95px;background:#6A9955;opacity:0.30"></div>
<div style="left:824.16px;top:106.01px;width:4.34px;height:0.95px;background:#6A9955;opacity:0.23"></div>
<div style="left:816.33px;top:107.30px;width:3.13px;height:0.95px;background:#6A9955;opacity:0.22"></div>
<div style="left:820.25px;top:107.30px;width:0.78px;height:0.95px;background:#6A9955;opacity:0.21"></div>
<div style="left:821.81px;top:107.30px;width:1.57px;height:0.95px;background:#6A9955;opacity:0.25"></div>
<div style="left:824.16px;top:107.30px;width:0.78px;height:0.95px;background:#6A9955;opacity:0.32"></div>
<div style="left:825.73px;top:107.30px;width:2.35px;height:0.95px;background:#6A9955;opacity:0.37"></div>
<div style="left:816.33px;top:108.59px;width:0.78px;height:0.95px;background:#6A9955;opacity:0.23"></div>
<div style="left:817.90px;top:108.59px;width:2.35px;height:0.95px;background:#6A9955;opacity:0.30"></div>
<div style="left:821.03px;top:108.59px;width:3.92px;height:0.95px;background:#6A9955;opacity:0.24"></div>
<div style="left:825.73px;top:108.59px;width:2.35px;height:0.95px;background:#6A9955;opacity:0.25"></div>
<div style="left:816.33px;top:109.87px;width:0.78px;height:0.95px;background:#6A9955;opacity:0.21"></div>
<div style="left:817.90px;top:109.87px;width:3.13px;height:0.95px;background:#6A9955;opacity:0.36"></div>
<div style="left:821.81px;top:109.87px;width:4.70px;height:0.95px;background:#6A9955;opacity:0.28"></div>
<div style="left:827.29px;top:109.87px;width:1.21px;height:0.95px;background:#6A9955;opacity:0.25"></div>
<div style="left:816.33px;top:111.16px;width:3.92px;height:0.95px;background:#6A9955;opacity:0.22"></div>
<div style="left:821.03px;top:111.16px;width:3.13px;height:0.95px;background:#6A9955;opacity:0.37"></div>
<div style="left:824.95px;top:111.16px;width:2.35px;height:0.95px;background:#6A9955;opacity:0.34"></div>
<div style="left:816.33px;top:112.44px;width:3.13px;height:0.95px;background:#6A9955;opacity:0.22"></div>
<div style="left:820.25px;top:112.44px;width:0.78px;height:0.95px;background:#6A9955;opacity:0.37"></div>
<div style="left:821.81px;top:112.44px;width:1.57px;height:0.95px;background:#6A9955;opacity:0.28"></div>
<div style="left:824.16px;top:112.44px;width:4.34px;height:0.95px;background:#6A9955;opacity:0.22"></div>
<div style="left:816.33px;top:113.73px;width:4.70px;height:0.95px;background:#d4d4d4;opacity:0.53"></div>
<div style="left:821.81px;top:113.73px;width:2.35px;height:0.95px;background:#d4d4d4;opacity:0.59"></div>
<div style="left:824.95px;top:113.73px;width:3.13px;height:0.95px;background:#d4d4d4;opacity:0.64"></div>
<div style="left:816.33px;top:115.02px;width:3.13px;height:0.95px;background:#d4d4d4;opacity:0.41"></div>
<div style="left:820.25px;top:115.02px;width:4.70px;height:0.95px;background:#d4d4d4;opacity:0.53"></div>
<div style="left:825.73px;top:115.02px;width:2.35px;height:0.95px;background:#d4d4d4;opacity:0.55"></div>
<div style="left:816.33px;top:117.59px;width:3.92px;height:0.95px;background:#6A9955;opacity:0.27"></div>
<div style="left:821.03px;top:117.59px;width:2.35px;height:0.95px;background:#6A9955;opacity:0.27"></div>
<div style="left:824.16px;top:117.59px;width:3.92px;height:0.95px;background:#6A9955;opacity:0.22"></div>
<div style="left:816.33px;top:118.87px;width:3.92px;height:0.95px;background:#d4d4d4;opacity:0.46"></div>
<div style="left:821.03px;top:118.87px;width:2.35px;height:0.95px;background:#d4d4d4;opacity:0.52"></div>
<div style="left:824.16px;top:118.87px;width:3.92px;height:0.95px;background:#d4d4d4;opacity:0.41"></div>
<div style="left:816.33px;top:121.45px;width:3.92px;height:0.95px;background:#6A9955;opacity:0.25"></div>
<div style="left:821.03px;top:121.45px;width:2.35px;height:0.95px;background:#6A9955;opacity:0.33"></div>
<div style="left:824.16px;top:121.45px;width:1.57px;height:0.95px;background:#6A9955;opacity:0.28"></div>
<div style="left:826.51px;top:121.45px;width:1.57px;height:0.95px;background:#6A9955;opacity:0.25"></div>
<div style="left:816.33px;top:122.73px;width:1.57px;height:0.95px;background:#d4d4d4;opacity:0.47"></div>
<div style="left:818.68px;top:122.73px;width:3.92px;height:0.95px;background:#d4d4d4;opacity:0.44"></div>
<div style="left:823.38px;top:122.73px;width:0.78px;height:0.95px;background:#d4d4d4;opacity:0.50"></div>
<div style="left:824.95px;top:122.73px;width:1.57px;height:0.95px;background:#d4d4d4;opacity:0.54"></div>
<div style="left:827.29px;top:122.73px;width:1.21px;height:0.95px;background:#d4d4d4;opacity:0.58"></div>
<div style="left:816.33px;top:124.02px;width:0.78px;height:0.95px;background:#d4d4d4;opacity:0.58"></div>
<div style="left:817.90px;top:124.02px;width:4.70px;height:0.95px;background:#d4d4d4;opacity:0.57"></div>
<div style="left:823.38px;top:124.02px;width:1.57px;height:0.95px;background:#d4d4d4;opacity:0.40"></div>
<div style="left:825.73px;top:124.02px;width:2.35px;height:0.95px;background:#d4d4d4;opacity:0.43"></div>
<div style="left:816.33px;top:126.59px;width:3.92px;height:0.95px;background:#6A9955;opacity:0.36"></div>
<div style="left:821.03px;top:126.59px;width:3.13px;height:0.95px;background:#6A9955;opacity:0.28"></div>
<div style="left:824.95px;top:126.59px;width:2.35px;height:0.95px;background:#6A9955;opacity:0.32"></div>
<div style="left:816.33px;top:127.88px;width:4.70px;height:0.95px;background:#d4d4d4;opacity:0.57"></div>
<div style="left:821.81px;top:127.88px;width:1.57px;height:0.95px;background:#d4d4d4;opacity:0.58"></div>
<div style="left:824.16px;top:127.88px;width:1.57px;height:0.95px;background:#d4d4d4;opacity:0.57"></div>
<div style="left:826.51px;top:127.88px;width:1.99px;height:0.95px;background:#d4d4d4;opacity:0.64"></div>
<div style="left:816.33px;top:129.16px;width:3.13px;height:0.95px;background:#6A9955;opacity:0.26"></div>
<div style="left:820.25px;top:129.16px;width:1.57px;height:0.95px;background:#6A9955;opacity:0.32"></div>
<div style="left:822.60px;top:129.16px;width:4.70px;height:0.95px;background:#6A9955;opacity:0.36"></div>
<div style="left:816.33px;top:130.45px;width:3.13px;height:0.95px;background:#6A9955;opacity:0.23"></div>
<div style="left:820.25px;top:130.45px;width:3.92px;height:0.95px;background:#6A9955;opacity:0.37"></div>
<div style="left:824.95px;top:130.45px;width:3.13px;height:0.95px;background:#6A9955;opacity:0.24"></div>
<div style="left:816.33px;top:133.02px;width:2.35px;height:0.95px;background:#6A9955;opacity:0.32"></div>
<div style="left:819.46px;top:133.02px;width:3.13px;height:0.95px;background:#6A9955;opacity:0.24"></div>
<div style="left:823.38px;top:133.02px;width:2.35px;height:0.95px;background:#6A9955;opacity:0.23"></div>
<div style="left:816.33px;top:134.31px;width:3.92px;height:0.95px;background:#d4d4d4;opacity:0.40"></div>
<div style="left:821.03px;top:134.31px;width:2.35px;height:0.95px;background:#d4d4d4;opacity:0.68"></div>
<div style="left:824.16px;top:134.31px;width:3.13px;height:0.95px;background:#d4d4d4;opacity:0.55"></div>
<div style="left:816.33px;top:136.88px;width:2.35px;height:0.95px;background:#d4d4d4;opacity:0.65"></div>
<div style="left:819.46px;top:136.88px;width:3.13px;height:0.95px;background:#d4d4d4;opacity:0.48"></div>
<div style="left:823.38px;top:136.88px;width:3.92px;height:0.95px;background:#d4d4d4;opacity:0.64"></div>
<div style="left:816.33px;top:138.16px;width:3.92px;height:0.95px;background:#d4d4d4;opacity:0.50"></div>
<div style="left:821.03px;top:138.16px;width:1.57px;height:0.95px;background:#d4d4d4;opacity:0.47"></div>
<div style="left:823.38px;top:138.16px;width:3.92px;height:0.95px;background:#d4d4d4;opacity:0.67"></div>
<div style="left:816.33px;top:140.74px;width:0.78px;height:0.95px;background:#6A9955;opacity:0.21"></div>
<div style="left:817.90px;top:140.74px;width:3.92px;height:0.95px;background:#6A9955;opacity:0.32"></div>
<div style="left:822.60px;top:140.74px;width:1.57px;height:0.95px;background:#6A9955;opacity:0.23"></div>
<div style="left:824.95px;top:140.74px;width:1.57px;height:0.95px;background:#6A9955;opacity:0.30"></div>
<div style="left:827.29px;top:140.74px;width:1.21px;height:0.95px;background:#6A9955;opacity:0.29"></div>
<div style="left:816.33px;top:142.02px;width:3.13px;height:0.95px;background:#d4d4d4;opacity:0.64"></div>
<div style="left:820.25px;top:142.02px;width:3.13px;height:0.95px;background:#d4d4d4;opacity:0.43"></div>
<div style="left:824.16px;top:142.02px;width:4.34px;height:0.95px;background:#d4d4d4;opacity:0.55"></div>
<div style="left:816.33px;top:143.31px;width:1.57px;height:0.95px;background:#d4d4d4;opacity:0.69"></div>
<div style="left:818.68px;top:143.31px;width:2.35px;height:0.95px;background:#d4d4d4;opacity:0.60"></div>
<div style="left:821.81px;top:143.31px;width:3.13px;height:0.95px;background:#d4d4d4;opacity:0.70"></div>
<div style="left:825.73px;top:143.31px;width:2.77px;height:0.95px;background:#d4d4d4;opacity:0.70"></div>
<div style="left:816.33px;top:145.88px;width:1.57px;height:0.95px;background:#d4d4d4;opacity:0.63"></div>
<div style="left:818.68px;top:145.88px;width:4.70px;height:0.95px;background:#d4d4d4;opacity:0.42"></div>
<div style="left:824.16px;top:145.88px;width:0.78px;height:0.95px;background:#d4d4d4;opacity:0.64"></div>
<div style="left:825.73px;top:145.88px;width:0.78px;height:0.95px;background:#d4d4d4;opacity:0.68"></div>
<div style="left:827.29px;top:145.88px;width:1.21px;height:0.95px;background:#d4d4d4;opacity:0.47"></div>
<div style="left:816.33px;top:147.17px;width:4.70px;height:0.95px;background:#d4d4d4;opacity:0.47"></div>
<div style="left:821.81px;top:147.17px;width:2.35px;height:0.95px;background:#d4d4d4;opacity:0.51"></div>
<div style="left:824.95px;top:147.17px;width:2.35px;height:0.95px;background:#d4d4d4;opacity:0.41"></div>
<div style="left:816.33px;top:149.74px;width:0.78px;height:0.95px;background:#6A9955;opacity:0.21"></div>
<div style="left:817.90px;top:149.74px;width:3.13px;height:0.95px;background:#6A9955;opacity:0.23"></div>
<div style="left:821.81px;top:149.74px;width:4.70px;height:0.95px;background:#6A9955;opacity:0.34"></div>
<div style="left:827.29px;top:149.74px;width:1.21px;height:0.95px;background:#6A9955;opacity:0.37"></div>
<div style="left:816.33px;top:151.02px;width:2.35px;height:0.95px;background:#d4d4d4;opacity:0.49"></div>
<div style="left:819.46px;top:151.02px;width:3.92px;height:0.95px;background:#d4d4d4;opacity:0.57"></div>
<div style="left:824.16px;top:151.02px;width:3.13px;height:0.95px;background:#d4d4d4;opacity:0.72"></div>
<div style="left:816.33px;top:152.31px;width:2.35px;height:0.95px;background:#d4d4d4;opacity:0.55"></div>
<div style="left:819.46px;top:152.31px;width:4.70px;height:0.95px;background:#d4d4d4;opacity:0.48"></div>
<div style="left:824.95px;top:152.31px;width:1.57px;height:0.95px;background:#d4d4d4;opacity:0.49"></div>
<div style="left:827.29px;top:152.31px;width:1.21px;height:0.95px;background:#d4d4d4;opacity:0.67"></div>
<div style="left:816.33px;top:154.88px;width:4.70px;height:0.95px;background:#d4d4d4;opacity:0.50"></div>
<div style="left:821.81px;top:154.88px;width:2.35px;height:0.95px;background:#d4d4d4;opacity:0.47"></div>
<div style="left:824.95px;top:154.88px;width:3.55px;height:0.95px;background:#d4d4d4;opacity:0.70"></div>
<div style="left:816.33px;top:156.17px;width:4.70px;height:0.95px;background:#d4d4d4;opacity:0.46"></div>
<div style="left:821.81px;top:156.17px;width:0.78px;height:0.95px;background:#d4d4d4;opacity:0.55"></div>
<div style="left:823.38px;top:156.17px;width:2.35px;height:0.95px;background:#d4d4d4;opacity:0.49"></div>
<div style="left:826.51px;top:156.17px;width:1.99px;height:0.95px;background:#d4d4d4;opacity:0.44"></div>
<div style="left:816.33px;top:157.45px;width:1.57px;height:0.95px;background:#d4d4d4;opacity:0.46"></div>
<div style="left:818.68px;top:157.45px;width:1.57px;height:0.95px;background:#d4d4d4;opacity:0.57"></div>
<div style="left:821.03px;top:157.45px;width:0.78px;height:0.95px;background:#d4d4d4;opacity:0.68"></div>
<div style="left:822.60px;top:157.45px;width:3.13px;height:0.95px;background:#d4d4d4;opacity:0.58"></div>
<div style="left:826.51px;top:157.45px;width:1.99px;height:0.95px;background:#d4d4d4;opacity:0.56"></div>
<div style="left:813.20px;top:160.03px;width:0.78px;height:0.95px;background:#d4d4d4;opacity:0.40"></div>
</div></div>
</body></html>
